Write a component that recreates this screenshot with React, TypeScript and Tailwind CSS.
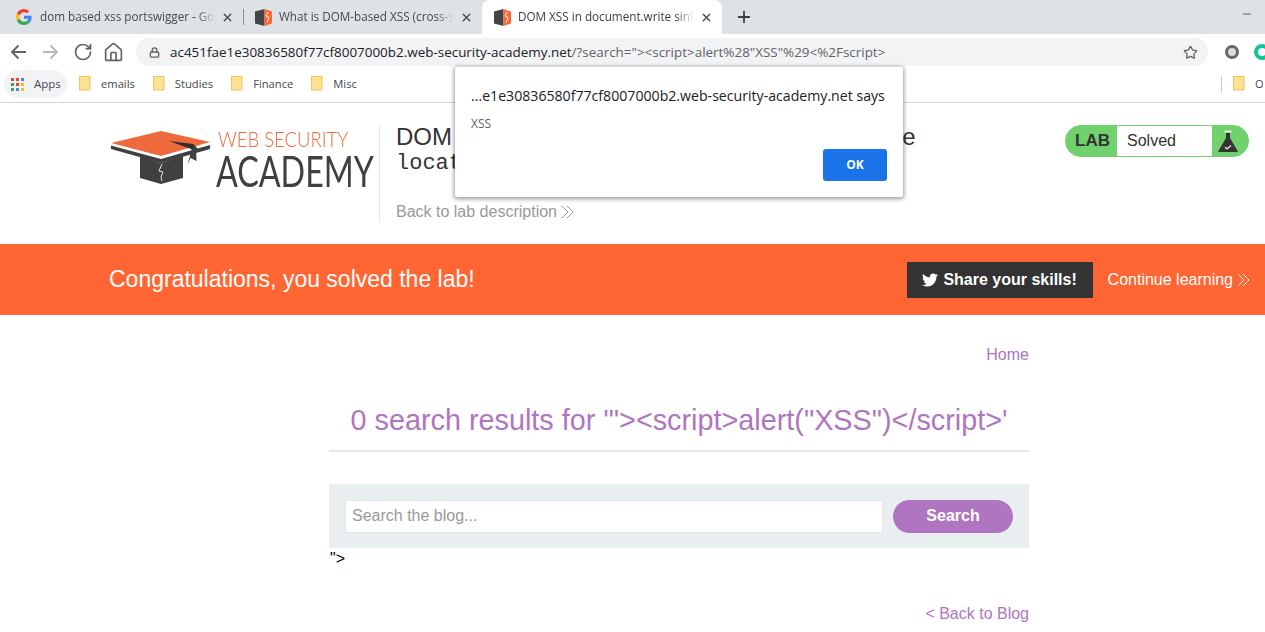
import { FaTwitter } from "react-icons/fa";
import { RotateCw, Home, Star, Lock, Plus, X, Minus } from "lucide-react";

function GoogleIcon() {
  return (
    <svg width="16" height="16" viewBox="0 0 48 48" className="shrink-0">
      <path fill="#EA4335" d="M24 9.500c3.500 0 6.700 1.200 9.100 3.600l6.800-6.800C35.800 2.500 30.300 0 24 0 14.600 0 6.500 5.400 2.600 13.200l7.900 6.100C12.400 13.600 17.700 9.500 24 9.500z" />
      <path fill="#4285F4" d="M46.900 24.500c0-1.600-.1-3.100-.4-4.500H24v9h12.900c-.6 3-2.200 5.500-4.700 7.200l7.600 5.900c4.400-4.100 7.100-10.100 7.100-17.600z" />
      <path fill="#FBBC05" d="M10.500 28.700c-.5-1.500-.8-3-.8-4.700s.3-3.200.8-4.700l-7.900-6.100C.9 16.500 0 20.100 0 24s.9 7.500 2.600 10.800l7.900-6.100z" />
      <path fill="#34A853" d="M24 48c6.500 0 11.900-2.100 15.800-5.800l-7.600-5.900c-2.100 1.400-4.900 2.300-8.200 2.300-6.300 0-11.600-4.100-13.500-9.800l-7.900 6.100C6.500 42.600 14.600 48 24 48z" />
    </svg>
  );
}

function LabIcon() {
  return (
    <svg width="17" height="17" viewBox="0 0 17 17" className="-mr-px shrink-0">
      <path fill="#444" d="M0 2.500L9.500 0v17L0 14.500z" />
      <path fill="#ff6633" d="M9.500 0L17 2.500v12L9.500 17z" />
      <path fill="none" stroke="#fff" strokeWidth="1" d="M13 3l-2 4 3 1.500-2 5" />
    </svg>
  );
}

function Tab({ icon, title, active, width }: { icon: React.ReactNode; title: string; active?: boolean; width: string }) {
  return (
    <div className={`flex h-[34px] shrink-0 items-center pr-[9px] pl-[12px] ${width} ${active ? "rounded-t-[8px] bg-white text-[#3c4043]" : "text-[#45494e]"}`}>
      {icon}
      <span className="ml-[8px] flex-1 overflow-hidden text-[11.7px] whitespace-nowrap [mask-image:linear-gradient(to_left,transparent,black_18px)]">{title}</span>
      <X size={13} strokeWidth={2.6} className="ml-[6px] shrink-0 text-[#45494e]" />
    </div>
  );
}

function FolderIcon() {
  return (
    <svg width="12" height="15" viewBox="0 0 12 15" className="shrink-0">
      <path fill="#fde293" stroke="#eec458" d="M.5.500h10.500v13.500H.5z" />
    </svg>
  );
}

function Folder({ label }: { label: string }) {
  return (
    <div className="flex items-center gap-[10px]">
      <FolderIcon />
      <span className="text-[11.2px] text-[#45494e]">{label}</span>
    </div>
  );
}

function Chevrons({ className }: { className: string }) {
  return (
    <svg width="13" height="14" viewBox="0 0 13 14" fill="none" stroke="currentColor" strokeWidth="1" className={className}>
      <path d="M1 1l6 6-6 6M6 1l6 6-6 6" />
    </svg>
  );
}

function NavArrow({ flip, className }: { flip?: boolean; className: string }) {
  return (
    <svg width="16" height="16" viewBox="0 0 16 16" fill="none" stroke="currentColor" strokeWidth="1.900" className={`shrink-0 ${flip ? "rotate-180" : ""} ${className}`}>
      <path d="M16 8H2M8.500 1.500L2 8l6.500 6.500" />
    </svg>
  );
}

function Logo() {
  return (
    <div className="flex h-[66px] w-[265px] shrink-0 items-start">
      <svg width="106" height="60" viewBox="0 0 106 60" className="mt-[3px] shrink-0">
        <path fill="#404040" d="M30 28l21 7 22-7v22l-22 6-21-6z" />
        <path fill="none" stroke="#e8e8e8" strokeWidth="1" d="M52 36l-3 7 4 1-2 5 1 4" />
        <path fill="#404040" d="M1 17.500L51 31l49-14v4L51 35 1 21z" />
        <path fill="#ee6a3c" d="M1 15L51 3l49 11-49 14z" />
        <path fill="#2f2f2f" d="M59 13l24 3 5 5-4 1z" />
        <path fill="#404040" d="M82 20l4-2 .5 15-6-3-3 7z" />
      </svg>
      <div className="flex flex-col">
        <span className="mt-[2px] ml-[2px] h-[25px] origin-left scale-x-[0.84] font-['Lato'] text-[22px] leading-[24px] font-light whitespace-nowrap text-[#ee6a3c]">WEB SECURITY</span>
        <span className="h-[38px] origin-left scale-x-[0.75] font-['Lato'] text-[43px] leading-[38px] whitespace-nowrap text-[#404040]">ACADEMY</span>
      </div>
    </div>
  );
}

export default function App() {
  return (
    <div className="relative h-[632px] w-[1265px] overflow-hidden bg-white font-['Liberation_Sans',sans-serif]">
      {/* browser chrome */}
      <div className="font-['Open_Sans','Noto_Sans',sans-serif]">
        <div className="flex h-[34px] items-center bg-[#dee1e6] pl-[4px]">
          <Tab width="w-[239px]" icon={<GoogleIcon />} title="dom based xss portswigger - Google Search" />
          <div className="h-[16px] w-px shrink-0 bg-[#8a8d91]" />
          <Tab width="-ml-px w-[239px]" icon={<LabIcon />} title="What is DOM-based XSS (cross-site scripting)" />
          <Tab width="w-[240px]" icon={<LabIcon />} title="DOM XSS in document.write sink using source" active />
          <Plus size={18} strokeWidth={2.4} className="ml-[13px] shrink-0 text-[#3c4043]" />
          <Minus size={12} strokeWidth={1.6} className="mr-[12px] mb-[6px] ml-auto shrink-0 text-[#3c4043]" />
        </div>
        <div className="flex h-[36px] items-center pl-[10px]">
          <NavArrow className="text-[#5f6368]" />
          <NavArrow flip className="ml-[17px] text-[#b5b7ba]" />
          <RotateCw size={20} strokeWidth={2} className="ml-[14px] shrink-0 text-[#5f6368]" />
          <Home size={21} strokeWidth={1.9} className="ml-[10px] shrink-0 text-[#5f6368]" />
          <div className="ml-[12px] flex h-[28px] w-[1072px] shrink-0 items-center rounded-full bg-[#f1f3f4] pl-[13px]">
            <Lock size={11} strokeWidth={3} className="shrink-0 text-[#5f6368]" />
            <span className="ml-[10px] text-[13.45px] whitespace-nowrap text-[#202124]">
              ac451fae1e30836580f77cf8007000b2.web-security-academy.net<span className="text-[#5f6368]">/?search="&gt;&lt;script&gt;alert%28"XSS"%29&lt;%2Fscript&gt;</span>
            </span>
            <Star size={15} strokeWidth={2} className="mr-[10px] ml-auto shrink-0 text-[#5f6368]" />
          </div>
          <div className="ml-[17px] size-[14px] shrink-0 rounded-full border-[3px] border-[#666] bg-[#ddd]" />
          <div className="ml-[15px] size-[16px] shrink-0 rounded-full border-[4px] border-[#15c39a] bg-white" />
        </div>
        <div className="flex h-[33px] items-center border-b border-[#d3d5d8] pb-[4px] pl-[4px]">
          <div className="flex h-[28px] w-[63px] items-center gap-[10px] rounded-full bg-[#f1f3f4] pl-[7px]">
            <div className="grid grid-cols-3 gap-[2px]">
              {["#ea4335", "#ea4335", "#4285f4", "#34a853", "#ea4335", "#fbbc05", "#34a853", "#4285f4", "#fbbc05"].map((c, i) => (
                <span key={i} className="size-[3px]" style={{ backgroundColor: c }} />
              ))}
            </div>
            <span className="text-[11.5px] text-[#45494e]">Apps</span>
          </div>
          <div className="ml-[12px] flex gap-[18px]">
            <Folder label="emails" />
            <Folder label="Studies" />
            <Folder label="Finance" />
            <Folder label="Misc" />
          </div>
          <div className="ml-auto flex items-center pr-[2px]">
            <div className="h-[17px] w-px bg-[#c8cacc]" />
            <div className="ml-[11px] flex items-center gap-[10px]">
              <FolderIcon />
              <span className="w-[8px] overflow-hidden text-[11.2px] text-[#45494e]">Other</span>
            </div>
          </div>
        </div>
      </div>

      {/* lab header */}
      <div className="flex h-[141px] pt-[22px] pl-[110px]">
        <Logo />
        <div className="ml-[4px] h-[97px] w-px bg-[#e6e6e6]" />
        <div className="ml-[16px] w-[600px]">
          <h2 className="-mt-px text-[24px] leading-[26px] whitespace-nowrap text-[#333]">
            DOM XSS in <span className="font-['Liberation_Mono',monospace] text-[22px]">document.write</span> sink using source
          </h2>
          <div className="-mt-px font-['Liberation_Mono',monospace] text-[22px] leading-[24px] text-[#333]">location.search</div>
          <div className="mt-[24px] flex items-center gap-[4px] text-[16px] text-[#999]">
            Back to lab description
            <Chevrons className="text-[#999]" />
          </div>
        </div>
        <div className="ml-[69px] flex h-[32px] w-[184px] shrink-0 items-center overflow-hidden rounded-full border border-[#70d16d] bg-[#70d16d]">
          <span className="w-[51px] pl-[9px] text-[17px] font-bold text-[#333]">LAB</span>
          <span className="flex h-full w-[95px] items-center bg-white pl-[10px] text-[16px] text-[#333]">Solved</span>
          <svg width="20" height="24" viewBox="0 0 20 24" className="ml-[6px]">
            <path fill="#333" d="M8 4h4v5l7 12a1 1 0 0 1-1 2H2a1 1 0 0 1-1-2l7-12z" />
            <path fill="#eee" d="M6.500 1.500h7v2h-7z" />
            <path fill="none" stroke="#eee" strokeWidth="1.200" d="M7 18l2 2 4-3.500" />
          </svg>
        </div>
      </div>

      {/* solved banner */}
      <div className="flex h-[71px] items-center bg-[#ff6633] pl-[109px]">
        <span className="text-[23px] text-white">Congratulations, you solved the lab!</span>
        <div className="ml-auto flex h-[36px] w-[186px] items-center justify-center gap-[5px] bg-[#333] text-[16px] font-bold text-white">
          <FaTwitter size={16} />
          Share your skills!
        </div>
        <div className="mr-[15px] ml-[15px] flex items-center gap-[4px] text-[16px] text-white">
          Continue learning
          <Chevrons className="text-white" />
        </div>
      </div>

      {/* blog content */}
      <div className="ml-[329px] w-[700px]">
        <div className="pt-[31px] text-right text-[16px] leading-[18px] text-[#b075c0]">Home</div>
        <h1 className="mt-[40px] border-b-2 border-[#e6e6e6] pb-[14px] text-center text-[28.8px] leading-[32px] text-[#b075c0]">
          0 search results for '"&gt;&lt;script&gt;alert("XSS")&lt;/script&gt;'
        </h1>
        <div className="mt-[32px] flex h-[64px] items-center bg-[#e9eef1] pl-[16px]">
          <input
            readOnly
            placeholder="Search the blog..."
            className="h-[33px] w-[538px] border border-[#e6e6e6] bg-white px-[6px] text-[16px] outline-none placeholder:text-[#999]"
          />
          <button className="ml-[10px] h-[33px] w-[120px] rounded-full bg-[#b075c0] text-[16px] font-bold text-white">Search</button>
        </div>
        <div className="mt-[2px] pl-[1px] text-[16px] leading-[18px] text-black">"&gt;</div>
        <div className="mt-[37px] text-right text-[16px] leading-[18px] text-[#b075c0]">&lt; Back to Blog</div>
      </div>

      {/* alert dialog */}
      <div className="absolute top-[67px] left-[455px] h-[130px] w-[448px] rounded-[2px] bg-white pt-[20px] pl-[16px] font-['Open_Sans','Noto_Sans',sans-serif] shadow-[0_1px_4px_1px_rgba(0,0,0,0.4)]">
        <div className="text-[14.14px] leading-[18px] whitespace-nowrap text-[#202124]">...e1e30836580f77cf8007000b2.web-security-academy.net says</div>
        <div className="mt-[11px] text-[12px] leading-[16px] text-[#5f6368]">XSS</div>
        <div className="absolute top-[82px] right-[16px] flex h-[32px] w-[64px] items-center justify-center rounded-[3px] bg-[#1a73e8] text-[12px] font-bold text-white">OK</div>
      </div>
    </div>
  );
}
